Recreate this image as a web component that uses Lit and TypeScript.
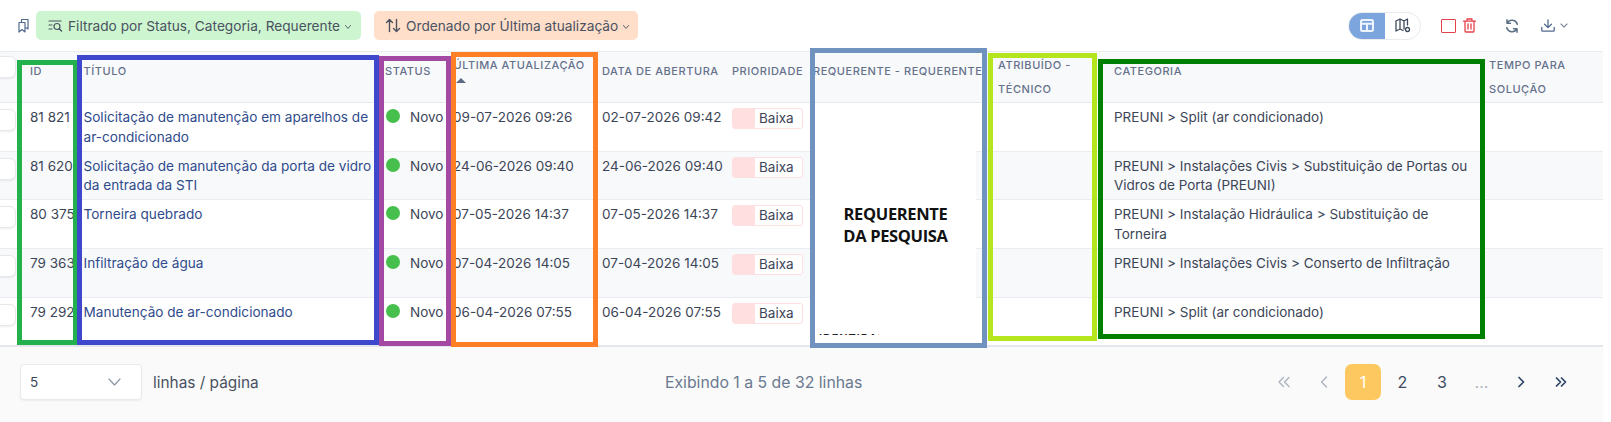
import { LitElement, html, css, svg } from "lit";
import { customElement } from "lit/decorators.js";

const rows = [
  { id: "81 821", title: "Solicitação de manutenção em aparelhos de ar-condicionado", up: "09-07-2026 09:26", open: "02-07-2026 09:42", cat: "PREUNI > Split (ar condicionado)" },
  { id: "81 620", title: "Solicitação de manutenção da porta de vidro da entrada da STI", up: "24-06-2026 09:40", open: "24-06-2026 09:40", cat: "PREUNI > Instalações Civis > Substituição de Portas ou Vidros de Porta (PREUNI)" },
  { id: "80 375", title: "Torneira quebrado", up: "07-05-2026 14:37", open: "07-05-2026 14:37", cat: "PREUNI > Instalação Hidráulica > Substituição de Torneira" },
  { id: "79 363", title: "Infiltração de água", up: "07-04-2026 14:05", open: "07-04-2026 14:05", cat: "PREUNI > Instalações Civis > Conserto de Infiltração" },
  { id: "79 292", title: "Manutenção de ar-condicionado", up: "06-04-2026 07:55", open: "06-04-2026 07:55", cat: "PREUNI > Split (ar condicionado)" },
];

const frames = [
  { c: "#22b14c", x: 17, y: 60, w: 61, h: 285 },
  { c: "#3f48cc", x: 77, y: 55, w: 302, h: 290 },
  { c: "#a349a4", x: 379, y: 56, w: 72, h: 290 },
  { c: "#ff7f27", x: 451, y: 52, w: 147, h: 295 },
  { c: "#7092be", x: 810, y: 48, w: 177, h: 300 },
  { c: "#b5e61d", x: 988, y: 53, w: 109, h: 288 },
  { c: "#008000", x: 1098, y: 59, w: 387, h: 280 },
];

const icon = (w: number, h: number, vb: string, body: unknown, cls = "") =>
  html`<svg class=${cls} width=${w} height=${h} viewBox=${vb} fill="none" stroke="currentColor" stroke-linecap="round" stroke-linejoin="round">${body}</svg>`;

const chev = () => icon(8, 6, "0 0 8 6", svg`<path d="M1.5 1.5 L4 4.5 L6.5 1.5" stroke-width="1"/>`, "chev");

@customElement("app-root")
export class AppRoot extends LitElement {
  static styles = css`
    :host {
      display: block;
      position: relative;
      width: 1611px;
      height: 422px;
      overflow: hidden;
      background: #fff;
      font-family: Inter, "Liberation Sans", sans-serif;
      color: #3c4557;
    }
    .card { width: 1603px; height: 422px; display: flex; flex-direction: column; }
    .toolbar {
      height: 51px;
      box-sizing: border-box;
      display: flex;
      align-items: center;
      padding: 0 0 0 18px;
      flex: none;
    }
    .bookmark { color: #51698f; margin-right: 7px; }
    .chip {
      height: 29px;
      display: flex;
      align-items: center;
      border-radius: 5px;
      font-size: 13.7px;
      color: #4a5161;
      white-space: nowrap;
      box-sizing: border-box;
    }
    .chip.green { background: #cdf6d0; width: 325px; padding-left: 12px; margin-right: 13px; }
    .chip.orange { background: #ffdfc9; width: 264px; padding-left: 11px; }
    .chip .lead { margin-right: 5px; flex: none; color: #4a5161; }
    .chip .chev { margin-left: 4px; margin-top: 3px; color: #5a6170; }
    .spacer { flex: 1; }
    .toggle {
      display: flex;
      width: 73px;
      height: 28px;
      border-radius: 14px;
      border: 1px solid #e9ebef;
      box-sizing: border-box;
      overflow: hidden;
      margin-right: 20px;
    }
    .toggle .on {
      width: 37px;
      margin: -1px 0 -1px -1px;
      background: #7ca4dd;
      color: #eef4fd;
      display: flex;
      align-items: center;
      justify-content: center;
    }
    .toggle .off {
      flex: 1;
      display: flex;
      align-items: center;
      justify-content: center;
      color: #3f4a5c;
    }
    .redbox {
      width: 15px;
      height: 14px;
      box-sizing: border-box;
      border: 1.8px solid #e7404a;
      border-radius: 1px;
      margin-right: 7px;
    }
    .trash { color: #e7404a; margin-right: 29px; }
    .sync { color: #5b7085; margin-right: 22px; }
    .dl { color: #51698f; margin-right: 5px; }
    .dlchev { color: #7a8797; margin-right: 35px; }

    .thead, .row {
      display: grid;
      grid-template-columns: 24px 54.5px 301.5px 69.5px 147.5px 129px 82px 185px 116px 374px 120px;
    }
    .thead {
      height: 52px;
      flex: none;
      background: #f8f9fb;
      border-top: 1px solid #e9ebef;
      border-bottom: 1px solid #e6e9ee;
      box-sizing: border-box;
    }
    .th {
      padding-left: 5px;
      font-size: 11px;
      line-height: 24px;
      letter-spacing: 0.55px;
      font-weight: 500;
      color: #65718b;
      text-transform: uppercase;
      white-space: nowrap;
      align-self: center;
    }
    .th.p6 { padding-left: 6px; }
    .th.up { padding-left: 4px; }
    .th.wrap { white-space: normal; }
    .th .gap { height: 12px; }
    .th .sort { height: 24px; display: block; line-height: 0; }
    .tri {
      display: inline-block;
      width: 0;
      height: 0;
      border-left: 5.5px solid transparent;
      border-right: 5.5px solid transparent;
      border-bottom: 5px solid #5d6a86;
      margin: 1px 0 0 2px;
    }
    .box {
      display: block;
      width: 22px;
      height: 22px;
      box-sizing: border-box;
      margin-left: -6px;
      background: #fff;
      border: 1px solid #e6e8ec;
      border-radius: 6px;
      box-shadow: 0 1px 2px rgba(20, 30, 50, 0.08);
    }
    .thead .box { margin-top: 4px; }
    .row {
      height: 48.7px;
      box-sizing: border-box;
      border-bottom: 1px solid #e9ecf1;
      flex: none;
      background: #fff;
    }
    .row.alt { background: #f8f9fb; }
    .row:last-of-type { border-bottom: none; }
    .td {
      padding: 5px 5px 0;
      font-size: 13.5px;
      line-height: 19.5px;
      white-space: nowrap;
      color: #3c4557;
    }
    .td.p6 { padding-left: 6px; }
    .td.up { padding-left: 3.5px; }
    .td.chk { padding: 6px 0 0; }
    .td.title { white-space: normal; color: #2f4b8c; padding-right: 4px; font-size: 13.6px; }
    .td.cat { white-space: normal; padding-right: 12px; }
    .td.status { display: flex; padding-left: 6px; }
    .dot {
      width: 14px;
      height: 14px;
      border-radius: 50%;
      background: #46bf4c;
      margin: 1px 10px 0 0;
      flex: none;
    }
    .badge {
      display: flex;
      width: 71px;
      height: 21px;
      box-sizing: border-box;
      border: 1px solid #ffdfe0;
      border-radius: 3px;
      background: #fff;
      overflow: hidden;
      line-height: 19px;
    }
    .badge i { width: 22px; background: #ffdfe0; margin-right: 4px; flex: none; }

    .footer {
      flex: 1;
      background: #fafafa;
      border-top: 2px solid #e3e6ea;
      display: grid;
      grid-template-columns: 645px auto 1fr;
      align-items: center;
      padding: 0 0 5px 20px;
      margin-top: -1px;
    }
    .left { display: flex; align-items: center; font-size: 15.4px; color: #4a5161; }
    .select {
      width: 122px;
      height: 36px;
      box-sizing: border-box;
      background: #fff;
      border: 1px solid #e8eaee;
      border-radius: 4px;
      box-shadow: 0 1px 2px rgba(20, 30, 50, 0.06);
      display: flex;
      align-items: center;
      justify-content: space-between;
      padding: 0 20px 0 9px;
      font-size: 13.5px;
      margin-right: 11px;
      color: #3c4557;
    }
    .select svg { color: #8e97a5; }
    .count { font-size: 15.8px; color: #6a7990; }
    .pager {
      display: flex;
      gap: 3.5px;
      justify-content: flex-end;
      margin-right: 24.5px;
      font-size: 16px;
      color: #3e4a60;
    }
    .pg {
      width: 36px;
      height: 36px;
      display: flex;
      align-items: center;
      justify-content: center;
      border-radius: 7px;
    }
    .pg.cur { background: #fdc85f; color: #fff; }
    .pg.dim { color: #aab2bf; }
    .pg.nav { color: #2b4266; }

    .overlay { position: absolute; inset: 0; pointer-events: none; }
    .frame { position: absolute; box-sizing: border-box; border-style: solid; border-width: 5px; }
    .blank {
      position: absolute;
      left: 815px;
      top: 103px;
      width: 161px;
      height: 240px;
      background: #fff;
      display: flex;
      flex-direction: column;
      align-items: center;
      padding-top: 99.5px;
      box-sizing: border-box;
      font-family: "Open Sans", "Liberation Sans", sans-serif;
      font-weight: 700;
      font-size: 16.5px;
      line-height: 22.5px;
      letter-spacing: -0.35px;
      color: #111;
      text-align: center;
    }
    .frag {
      position: absolute;
      left: 819px;
      top: 333px;
      width: 60px;
      height: 2px;
      overflow: hidden;
      font: 600 11px/10px Inter, sans-serif;
      letter-spacing: 0.9px;
      color: #222;
    }
  `;

  render() {
    return html`
      <div class="card">
        <div class="toolbar">
          ${icon(11, 15, "0 0 11 15", svg`<path d="M1 4.5 H7 V14 L4 11.5 L1 14 Z M3.5 4 V1.5 H10 V11 L8 9.8" stroke-width="1.2"/>`, "bookmark")}
          <div class="chip green">
            ${icon(15, 13, "0 0 15 13", svg`<path d="M1 2 H13 M1 6 H4 M1 10 H4" stroke-width="1.2"/><circle cx="9" cy="7.5" r="3" stroke-width="1.2"/><path d="M11.3 9.8 L13.5 12" stroke-width="1.4"/>`, "lead")}
            Filtrado por Status, Categoria, Requerente ${chev()}
          </div>
          <div class="chip orange">
            ${icon(16, 15, "0 0 16 15", svg`<path d="M4.5 13.5 V1.5 M1.5 4.5 L4.5 1.5 L7.5 4.5 M11.5 1.5 V13.5 M8.5 10.5 L11.5 13.5 L14.5 10.5" stroke-width="1.4"/>`, "lead")}
            Ordenado por Última atualização ${chev()}
          </div>
          <div class="spacer"></div>
          <div class="toggle">
            <div class="on">
              ${icon(14, 13, "0 0 14 13", svg`<rect x="1" y="1" width="12" height="11" rx="1.5" stroke-width="2"/><path d="M1 4.8 H13 M7 4.8 V12" stroke-width="2"/>`)}
            </div>
            <div class="off">
              ${icon(16, 15, "0 0 16 15", svg`<path d="M1 3 L5 1 L9 3 L12.5 1 V7 M1 3 V13 L5 11 L8 12.5 M5 1 V11 M9 3 V11" stroke-width="1.3"/><circle cx="12.5" cy="11.5" r="2" stroke-width="1.3"/>`)}
            </div>
          </div>
          <div class="redbox"></div>
          ${icon(13, 15, "0 0 13 15", svg`<path d="M0.5 3.2 H12.5 M4 3 V1 H9 V3 M2 3.2 V13 A1 1 0 0 0 3 14 H10 A1 1 0 0 0 11 13 V3.2 M5 6 V11 M8 6 V11" stroke-width="1.3"/>`, "trash")}
          ${icon(14, 14, "0 0 14 14", svg`<path d="M12.3 5.2 A5.6 5.6 0 0 0 2.2 4 M1.7 8.8 A5.6 5.6 0 0 0 11.8 10 M2 0.8 V4.2 H5.4 M12 13.2 V9.8 H8.6" stroke-width="1.5"/>`, "sync")}
          ${icon(14, 13, "0 0 14 13", svg`<path d="M7 0.8 V8.5 M3.6 5.2 L7 8.6 L10.4 5.2 M0.8 8.5 V11.5 A0.8 0.8 0 0 0 1.6 12.2 H12.4 A0.8 0.8 0 0 0 13.2 11.5 V8.5" stroke-width="1.3"/>`, "dl")}
          ${icon(8, 6, "0 0 8 6", svg`<path d="M1 1 L4 4.2 L7 1" stroke-width="1.1"/>`, "dlchev")}
        </div>

        <div class="thead">
          <div><span class="box"></span></div>
          <div class="th p6">Id<div class="gap"></div></div>
          <div class="th">Título<div class="gap"></div></div>
          <div class="th">Status<div class="gap"></div></div>
          <div class="th up">Última atualização<span class="sort"><span class="tri"></span></span></div>
          <div class="th">Data de abertura<div class="gap"></div></div>
          <div class="th p6">Prioridade<div class="gap"></div></div>
          <div class="th">Requerente - Requerente<div class="gap"></div></div>
          <div class="th wrap">Atribuído -<br />Técnico</div>
          <div class="th">Categoria<div class="gap"></div></div>
          <div class="th p6 wrap">Tempo para<br />solução</div>
        </div>

        ${rows.map(
          (r, i) => html`
            <div class="row ${i % 2 ? "alt" : ""}">
              <div class="td chk"><span class="box"></span></div>
              <div class="td p6">${r.id}</div>
              <div class="td title">${r.title}</div>
              <div class="td status"><span class="dot"></span>Novo</div>
              <div class="td up">${r.up}</div>
              <div class="td">${r.open}</div>
              <div class="td p6"><div class="badge"><i></i>Baixa</div></div>
              <div class="td"></div>
              <div class="td"></div>
              <div class="td cat">${r.cat}</div>
              <div class="td"></div>
            </div>
          `
        )}

        <div class="footer">
          <div class="left">
            <div class="select">5 ${icon(13, 8, "0 0 13 8", svg`<path d="M1 1 L6.5 7 L12 1" stroke-width="1.2"/>`)}</div>
            linhas / página
          </div>
          <div class="count">Exibindo 1 a 5 de 32 linhas</div>
          <div class="pager">
            <div class="pg dim">${icon(12, 12, "0 0 12 12", svg`<path d="M5.5 1.5 L1 6 L5.5 10.5 M11 1.5 L6.5 6 L11 10.5" stroke-width="1.4"/>`)}</div>
            <div class="pg dim">${icon(8, 12, "0 0 8 12", svg`<path d="M6.5 1 L1.5 6 L6.5 11" stroke-width="1.4"/>`)}</div>
            <div class="pg cur">1</div>
            <div class="pg">2</div>
            <div class="pg">3</div>
            <div class="pg dim">...</div>
            <div class="pg nav">${icon(8, 12, "0 0 8 12", svg`<path d="M2 1.5 L6.5 6 L2 10.5" stroke-width="1.7"/>`)}</div>
            <div class="pg nav">${icon(12, 12, "0 0 12 12", svg`<path d="M1.5 2 L5.5 6 L1.5 10 M6.5 2 L10.5 6 L6.5 10" stroke-width="1.7"/>`)}</div>
          </div>
        </div>
      </div>

      <div class="overlay">
        <div class="blank">REQUERENTE<br />DA PESQUISA</div>
        <div class="frag">IDENTIDADE</div>
        ${frames.map(
          (f) => html`<div class="frame" style="left:${f.x}px;top:${f.y}px;width:${f.w}px;height:${f.h}px;border-color:${f.c}"></div>`
        )}
      </div>
    `;
  }
}
